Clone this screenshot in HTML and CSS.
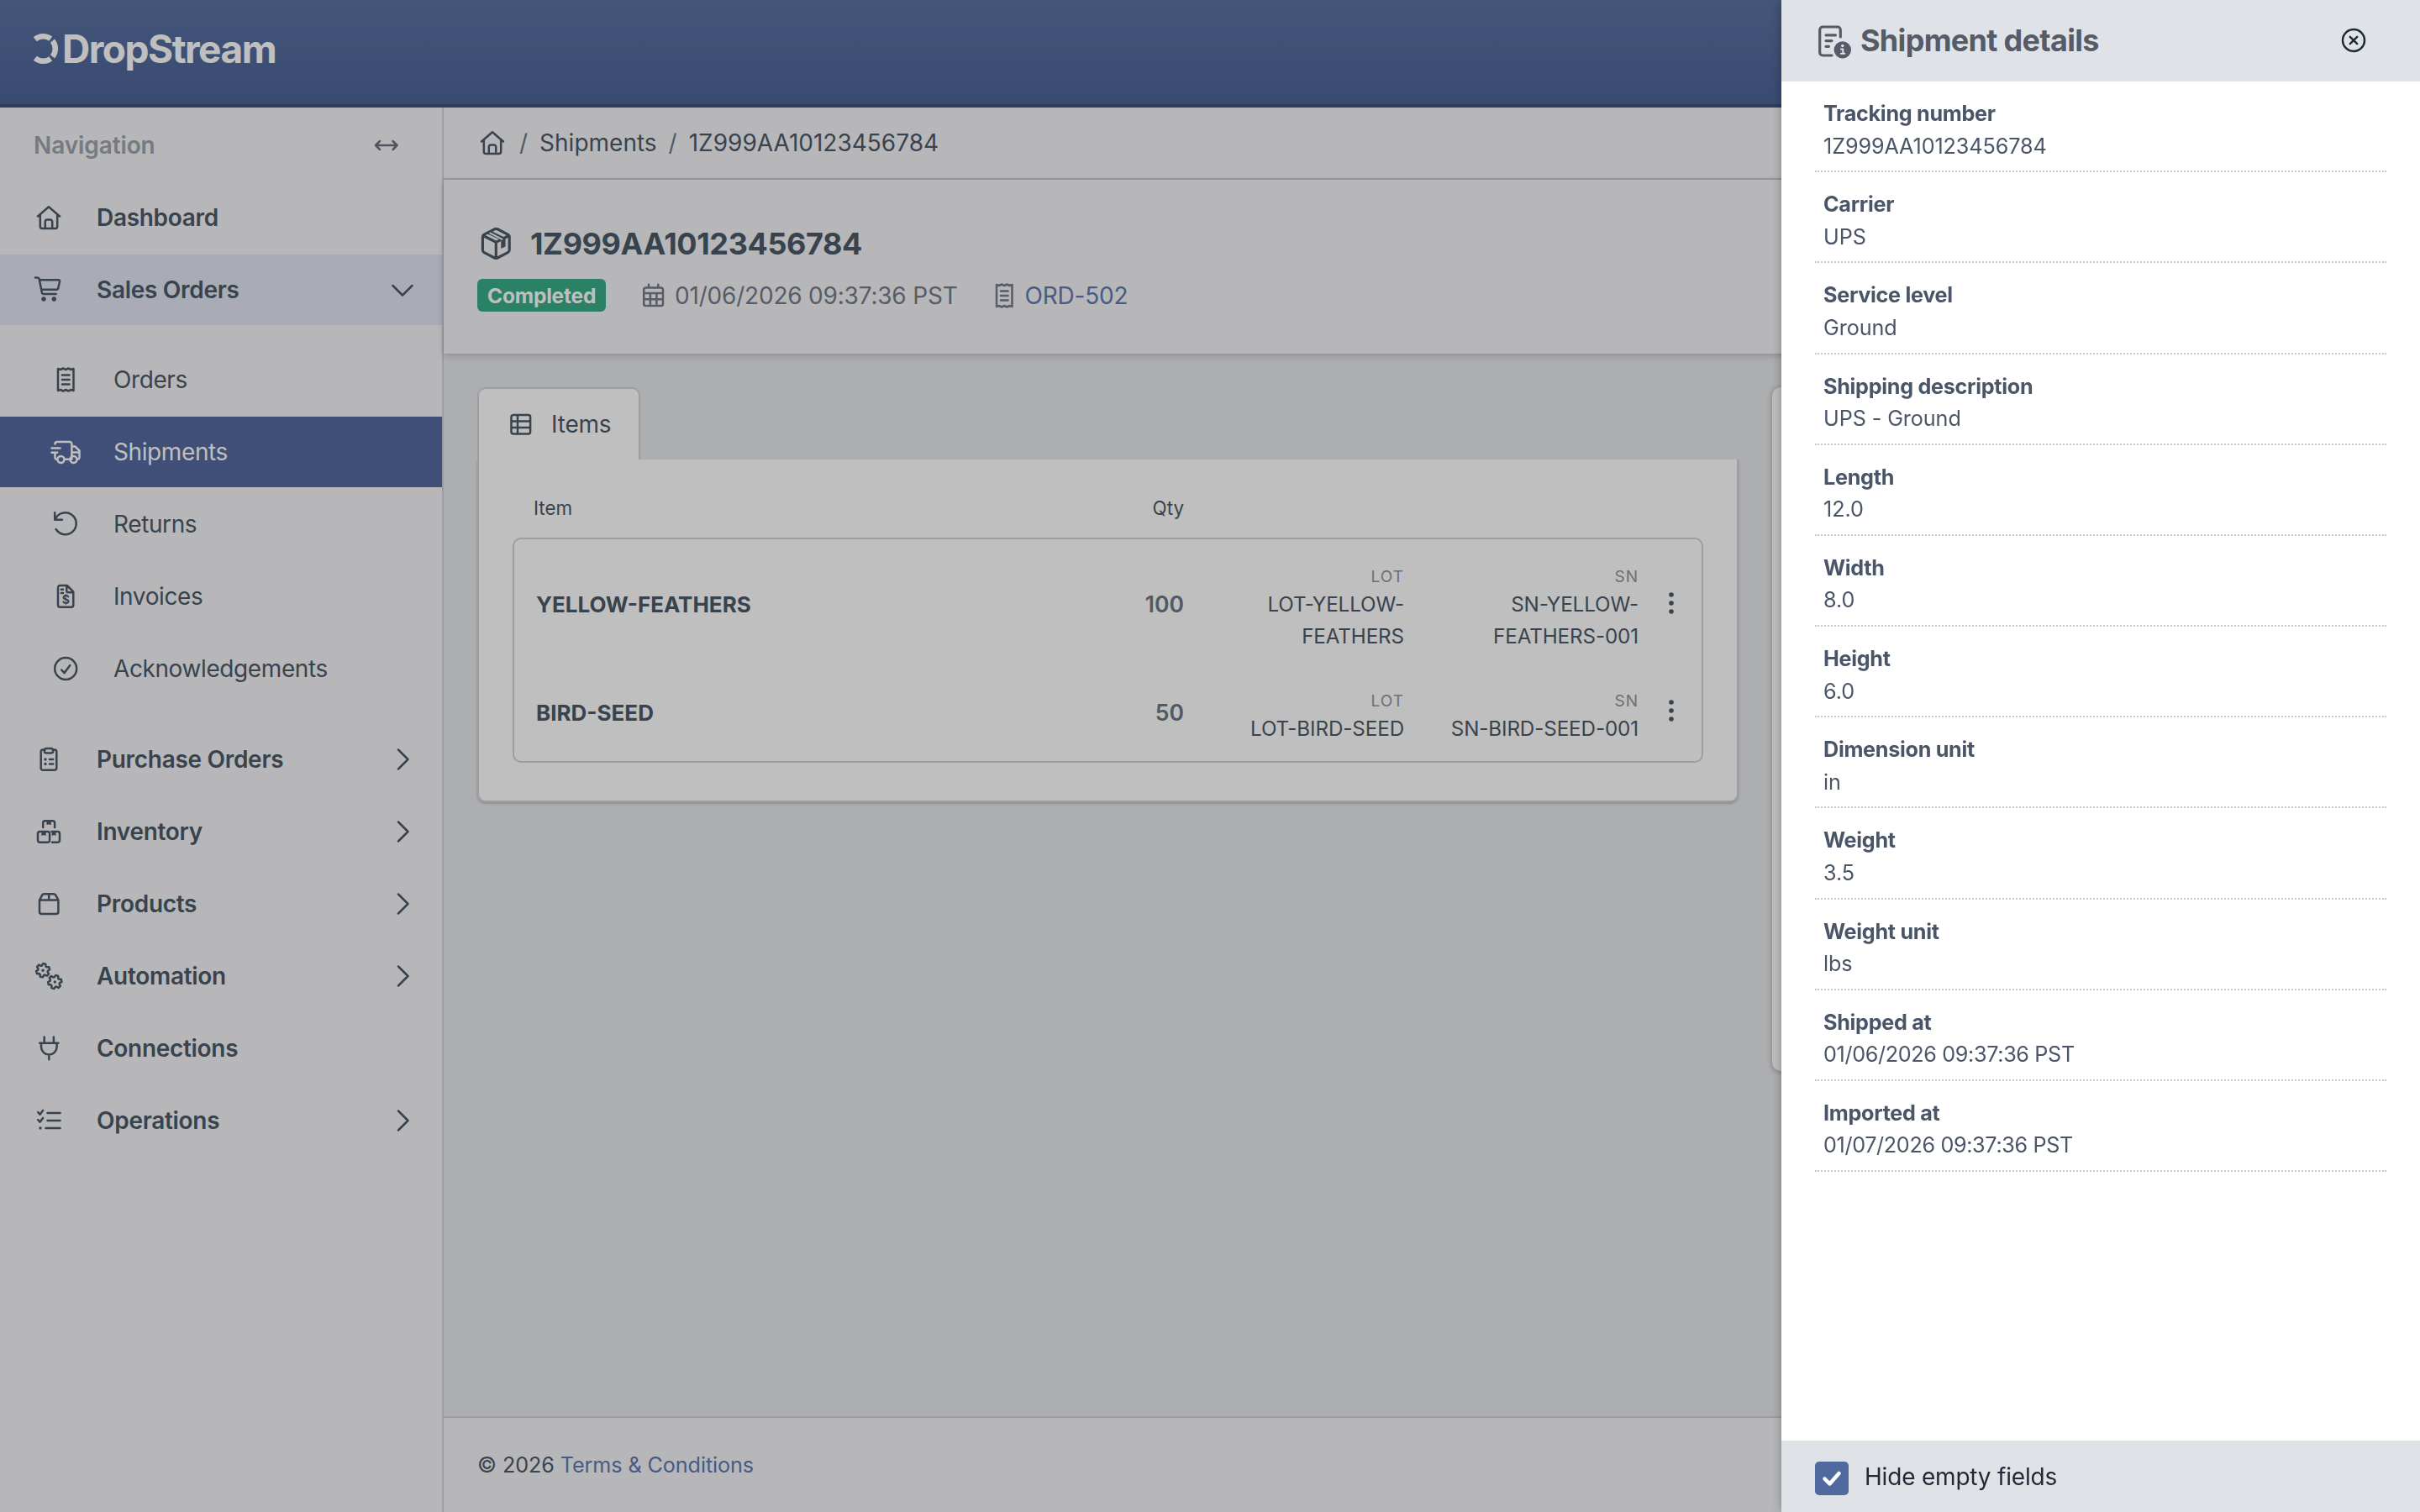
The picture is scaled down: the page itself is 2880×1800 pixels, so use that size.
FILE: index.html
```html
<!DOCTYPE html>
<html lang="en">
<head>
  <meta charset="utf-8">
  <title>DropStream - Shipment 1Z999AA10123456784</title>
  <link rel="stylesheet" href="styles.css">
</head>
<body>

  <!-- icons -->
  <svg class="sprite">
    <symbol id="home" viewBox="0 0 32 32">
      <path d="M3 14.5 16 3.2l13 11.3M5.800 12.500v14a2.500 2.500 0 0 0 2.500 2.500h15.400a2.500 2.500 0 0 0 2.500-2.500v-14M11.800 28.500v-7.500a2.500 2.500 0 0 1 2.500-2.500h3.400a2.500 2.500 0 0 1 2.500 2.500v7.500"/>
    </symbol>
    <symbol id="cart" viewBox="0 0 32 32">
      <path d="M0 1.500h2.600a2 2 0 0 1 2 1.600l3.200 16a2.300 2.300 0 0 0 2.300 1.900h14.500M5.200 4.200h22.600a1.300 1.300 0 0 1 1.300 1.600l-1.800 8.200a2.300 2.300 0 0 1-2.300 1.800H7.200"/>
      <circle class="fill" cx="10" cy="27" r="2.700"/><circle class="fill" cx="22.300" cy="27" r="2.700"/>
    </symbol>
    <symbol id="receipt" viewBox="0 0 32 32">
      <path d="M7 3.200V28.800M25.500 3.200V28.800M7 3l3 1 3.100-1.500 3.200 1.500 3.100-1.500 3.100 1.500 3-1M7 29l3-1 3.100 1.500 3.200-1.500 3.100 1.500 3.100-1.500 3 1M12 10.500h8.600M12 16h8.600M12 21.500h8.600"/>
    </symbol>
    <symbol id="truck" viewBox="0 0 32 32">
      <path d="M3.500 6.500c0-1.500 1-2.400 2.400-2.400H21a2.400 2.400 0 0 1 2.400 2.400v18.300M-.5 11.500H9.500M-.5 16.800H6.200M3.500 17v5.500a2.300 2.300 0 0 0 2.300 2.300M14.800 24.800h6.500M23.400 9.500h3.900l5.200 5v8a2.300 2.300 0 0 1-2.300 2.300M23.400 16.400h9"/>
      <circle cx="10.500" cy="25" r="4"/><circle cx="25.500" cy="25" r="4"/>
    </symbol>
    <symbol id="undo" viewBox="0 0 32 32">
      <path d="M3.200 2.300v8.500h8.700M3.600 10.600A13 13 0 1 1 4.600 22"/>
    </symbol>
    <symbol id="invoice" viewBox="0 0 32 32">
      <path d="M9.500 3h8.300l7.500 7.500v15.800a2.500 2.500 0 0 1-2.500 2.500H9.500a2.500 2.500 0 0 1-2.500-2.500V5.500A2.500 2.500 0 0 1 9.500 3zM17.300 3.500v5.700a2 2 0 0 0 2 2H25M10.800 7.800h2.200M10.800 12h2.200"/>
      <text class="glyph" x="16.200" y="25.300" text-anchor="middle">$</text>
    </symbol>
    <symbol id="check-circle" viewBox="0 0 32 32">
      <circle cx="16.200" cy="16" r="13"/><path d="M11.200 17.500l3.300 3.700 6.800-9.200"/>
    </symbol>
    <symbol id="clipboard" viewBox="0 0 32 32">
      <path d="M11.500 4.500H9a2.300 2.300 0 0 0-2.300 2.300v19.700A2.300 2.300 0 0 0 9 28.800h14a2.300 2.300 0 0 0 2.300-2.300V6.800A2.300 2.300 0 0 0 23 4.500h-2.500M13.500 3h5a2.800 2.800 0 0 1 0 5.600h-5a2.800 2.800 0 0 1 0-5.600zM17 16h4.200M17 21.500h4.200"/>
      <circle class="fill" cx="12" cy="16" r="1.700"/><circle class="fill" cx="12" cy="21.500" r="1.700"/>
    </symbol>
    <symbol id="boxes" viewBox="0 0 32 32">
      <path d="M9.200 11V5.500A2.300 2.300 0 0 1 11.500 3.200h9.300a2.300 2.300 0 0 1 2.300 2.300V11M5.300 16h9.500a2.300 2.300 0 0 1 2.300 2.300v8.200a2.300 2.300 0 0 1-2.300 2.300H5.300A2.300 2.300 0 0 1 3 26.500v-8.200A2.300 2.300 0 0 1 5.300 16zM19.500 16h7.200a2.300 2.300 0 0 1 2.300 2.300v8.200a2.300 2.300 0 0 1-2.300 2.300H20"/>
      <path class="fill" d="M13.500 4h5.300v4.200l-2.600-1-2.700 1zM7.400 16.500h5.300v4.400l-2.600-1-2.700 1zM19.800 16.500h4.700v4.400l-2.300-1-2.400 1z"/>
    </symbol>
    <symbol id="box" viewBox="0 0 32 32">
      <path d="M5 11.500 8 5.800a3 3 0 0 1 2.600-1.500h11.200a3 3 0 0 1 2.600 1.500l3 5.700v14a2.500 2.500 0 0 1-2.500 2.500H7.500A2.500 2.500 0 0 1 5 25.500zM5 11.500h22.400M16.200 4.300v7.200"/>
    </symbol>
    <symbol id="gears" viewBox="0 0 32 32">
      <path transform="translate(9.100 9.200) rotate(12)" d="M-2.300-5.400-1.600-8h3.200l.7 2.600 1.230.71 2.600-.7 1.600 2.780-1.900 1.900v1.420l1.900 1.900-1.600 2.780-2.600-.7-1.230.71-.7 2.600h-3.200l-.7-2.600-1.230-.71-2.600.7-1.600-2.780 1.900-1.900V-.71l-1.900-1.900 1.600-2.780 2.600.7z"/>
      <path transform="translate(23.300 23) rotate(18)" d="M-2.300-5.400-1.600-8h3.200l.7 2.600 1.230.71 2.600-.7 1.600 2.780-1.900 1.900v1.420l1.900 1.900-1.600 2.780-2.600-.7-1.230.71-.7 2.600h-3.200l-.7-2.600-1.230-.71-2.600.7-1.600-2.780 1.900-1.900V-.71l-1.900-1.900 1.600-2.780 2.600.7z"/>
      <circle class="fill" cx="9.100" cy="9.200" r="1.700"/><circle class="fill" cx="23.300" cy="23" r="1.700"/>
    </symbol>
    <symbol id="plug" viewBox="0 0 32 32">
      <path d="M10.700 2.500v7M21.900 2.500v7M5.200 9.700h22.200M7 9.700v4.600a9.300 9.300 0 0 0 18.600 0V9.700M16.300 23.700v5.600"/>
    </symbol>
    <symbol id="tasks" viewBox="0 0 32 32">
      <path d="M3.200 6l2.300 2.700 3.600-4.800M3.200 15l2.300 2.700 3.600-4.800M14.500 7h15M14.500 16h15M12.500 25h17"/>
      <circle class="fill" cx="6" cy="25" r="1.700"/>
    </symbol>
    <symbol id="chevron" viewBox="0 0 32 32"><path d="M11 4.500 22.500 16 11 27.500"/></symbol>
    <symbol id="arrows" viewBox="0 0 32 32"><path d="M3 16h25.600M8 11l-5 5 5 5M23.600 11l5 5-5 5"/></symbol>
    <symbol id="package" viewBox="0 0 40 40">
      <path d="M18.500 2.800a4 4 0 0 1 3.600 0l12.200 6.300a3.300 3.300 0 0 1 1.900 3v15.500a3.300 3.300 0 0 1-1.900 3L22.100 37a4 4 0 0 1-3.600 0L6.200 30.600a3.300 3.300 0 0 1-1.800-3V12.100a3.300 3.300 0 0 1 1.800-3zM5 10.500l15.300 7.800L35.500 10.500M20.300 18.500v18"/>
      <path class="fill" d="M9 8l5.500-3L31.500 13v10.500l-5.200 2.500V16z"/>
      <path class="cut" d="M13.500 7.600 27.500 14.800"/>
    </symbol>
    <symbol id="calendar" viewBox="0 0 32 32">
      <path d="M6.500 6.500h18.200a2.300 2.300 0 0 1 2.300 2.300v17a2.300 2.300 0 0 1-2.300 2.300H6.500a2.300 2.300 0 0 1-2.300-2.300v-17a2.300 2.300 0 0 1 2.300-2.300zM10 2.800v3.500M21.300 2.800v3.500M4.500 13h22.300M4.500 20.300h22.300M11.900 13v15M19.400 13v15"/>
    </symbol>
    <symbol id="table" viewBox="0 0 32 32">
      <path d="M7 5h17.600a2.500 2.500 0 0 1 2.500 2.500v17.600a2.500 2.500 0 0 1-2.500 2.500H7a2.500 2.500 0 0 1-2.500-2.500V7.500A2.500 2.500 0 0 1 7 5zM4.500 12.500h22.600M4.500 20h22.600M12 5v22.600"/>
    </symbol>
    <symbol id="details" viewBox="0 0 40 40">
      <path d="M30.300 16V7.500a3.500 3.500 0 0 0-3.500-3.500H9.200a3.500 3.500 0 0 0-3.500 3.500v27a3.500 3.500 0 0 0 3.500 3.500H20M13 13.800h11.500M13 20.600h7M13 27.300h3.500"/>
      <circle class="fill" cx="32.800" cy="31.400" r="10.200"/>
      <circle class="hole" cx="32.800" cy="26.500" r="1.700"/>
      <path class="mark" d="M31 30.500h2.300v5M30.800 35.700h4.600"/>
    </symbol>
    <symbol id="close" viewBox="0 0 32 32"><circle cx="16" cy="16" r="13"/><path d="M11.800 11.800l8.400 8.400M20.200 11.800l-8.400 8.400"/></symbol>
    <symbol id="dots" viewBox="0 0 8 32">
      <circle class="fill" cx="4" cy="6" r="2.800"/><circle class="fill" cx="4" cy="16" r="2.800"/><circle class="fill" cx="4" cy="26" r="2.800"/>
    </symbol>
  </svg>

  <header class="topbar">
    <svg class="logo-mark" viewBox="0 0 32 36"><path d="M1.800 6.800A15 15 0 0 1 20.300 6.200M22.500 8.600A15 15 0 0 1 22.500 27.400M20.300 29.800A15 15 0 0 1 1.800 29.200"/></svg>
    <span class="logo-text">DropStream</span>
  </header>

  <div class="layout">
    <nav class="sidebar">
      <div class="nav-title">Navigation <svg class="icon"><use href="#arrows"/></svg></div>
      <a class="nav-item"><svg class="icon"><use href="#home"/></svg><span>Dashboard</span></a>
      <a class="nav-item open"><svg class="icon"><use href="#cart"/></svg><span>Sales Orders</span><svg class="icon chevron down"><use href="#chevron"/></svg></a>
      <div class="sub-nav">
        <a class="nav-item"><svg class="icon"><use href="#receipt"/></svg><span>Orders</span></a>
        <a class="nav-item active"><svg class="icon"><use href="#truck"/></svg><span>Shipments</span></a>
        <a class="nav-item"><svg class="icon"><use href="#undo"/></svg><span>Returns</span></a>
        <a class="nav-item"><svg class="icon"><use href="#invoice"/></svg><span>Invoices</span></a>
        <a class="nav-item"><svg class="icon"><use href="#check-circle"/></svg><span>Acknowledgements</span></a>
      </div>
      <a class="nav-item"><svg class="icon"><use href="#clipboard"/></svg><span>Purchase Orders</span><svg class="icon chevron"><use href="#chevron"/></svg></a>
      <a class="nav-item"><svg class="icon"><use href="#boxes"/></svg><span>Inventory</span><svg class="icon chevron"><use href="#chevron"/></svg></a>
      <a class="nav-item"><svg class="icon"><use href="#box"/></svg><span>Products</span><svg class="icon chevron"><use href="#chevron"/></svg></a>
      <a class="nav-item"><svg class="icon"><use href="#gears"/></svg><span>Automation</span><svg class="icon chevron"><use href="#chevron"/></svg></a>
      <a class="nav-item"><svg class="icon"><use href="#plug"/></svg><span>Connections</span></a>
      <a class="nav-item"><svg class="icon"><use href="#tasks"/></svg><span>Operations</span><svg class="icon chevron"><use href="#chevron"/></svg></a>
    </nav>

    <main class="main">
      <div class="breadcrumb">
        <svg class="icon"><use href="#home"/></svg>
        <span class="slash">/</span>
        <span>Shipments</span>
        <span class="slash">/</span>
        <span>1Z999AA10123456784</span>
      </div>

      <div class="page-header">
        <h1><svg class="icon-lg"><use href="#package"/></svg>1Z999AA10123456784</h1>
        <div class="meta">
          <span class="badge">Completed</span>
          <span class="meta-item"><svg class="icon"><use href="#calendar"/></svg>01/06/2026 09:37:36 PST</span>
          <span class="meta-item"><svg class="icon"><use href="#receipt"/></svg><a>ORD-502</a></span>
        </div>
      </div>

      <div class="content">
        <section class="items">
          <div class="tab"><svg class="icon"><use href="#table"/></svg>Items</div>
          <div class="panel">
            <div class="items-head"><span>Item</span><span>Qty</span></div>
            <div class="items-box">
              <div class="item-row">
                <b class="sku">YELLOW-FEATHERS</b>
                <span class="qty">100</span>
                <div class="attr"><small>LOT</small>LOT-YELLOW-<br>FEATHERS</div>
                <div class="attr"><small>SN</small>SN-YELLOW-<br>FEATHERS-001</div>
                <svg class="dots"><use href="#dots"/></svg>
              </div>
              <div class="item-row short">
                <b class="sku">BIRD-SEED</b>
                <span class="qty">50</span>
                <div class="attr"><small>LOT</small>LOT-BIRD-SEED</div>
                <div class="attr"><small>SN</small>SN-BIRD-SEED-001</div>
                <svg class="dots"><use href="#dots"/></svg>
              </div>
            </div>
          </div>
        </section>
        <aside class="side-card"></aside>
      </div>

      <footer class="footer">© 2026 <a>Terms &amp; Conditions</a></footer>
    </main>
  </div>

  <div class="backdrop"></div>

  <div class="drawer">
    <div class="drawer-head">
      <h2><svg class="icon-lg"><use href="#details"/></svg>Shipment details</h2>
      <svg class="icon"><use href="#close"/></svg>
    </div>
    <dl class="fields">
      <div><dt>Tracking number</dt><dd>1Z999AA10123456784</dd></div>
      <div><dt>Carrier</dt><dd>UPS</dd></div>
      <div><dt>Service level</dt><dd>Ground</dd></div>
      <div><dt>Shipping description</dt><dd>UPS - Ground</dd></div>
      <div><dt>Length</dt><dd>12.0</dd></div>
      <div><dt>Width</dt><dd>8.0</dd></div>
      <div><dt>Height</dt><dd>6.0</dd></div>
      <div><dt>Dimension unit</dt><dd>in</dd></div>
      <div><dt>Weight</dt><dd>3.5</dd></div>
      <div><dt>Weight unit</dt><dd>lbs</dd></div>
      <div><dt>Shipped at</dt><dd class="time">01/06/2026 09:37:36 PST</dd></div>
      <div><dt>Imported at</dt><dd class="time">01/07/2026 09:37:36 PST</dd></div>
    </dl>
    <label class="drawer-foot">
      <span class="checkbox"><svg viewBox="0 0 40 40"><path d="M11.500 20.500l6 6L28.500 14"/></svg></span>
      Hide empty fields
    </label>
  </div>

</body>
</html>
```
FILE: styles.css
```css
* {
  box-sizing: border-box;
}
body {
  margin: 0;
  height: 1800px;
  overflow: hidden;
  display: flex;
  flex-direction: column;
  font-family: Inter, "Liberation Sans", sans-serif;
  font-size: 28px;
  color: #4d5a68;
  background: #e7e8ea;
}
h1, h2, dl, dd {
  margin: 0;
}

/* icons */
.sprite {
  position: absolute;
  width: 0;
  height: 0;
}
svg {
  flex: none;
  overflow: visible;
  fill: none;
  stroke: currentColor;
  stroke-width: 2.5;
  stroke-linecap: round;
  stroke-linejoin: round;
}
symbol {
  overflow: visible;
}
.icon {
  width: 32px;
  height: 32px;
}
.icon-lg {
  width: 40px;
  height: 40px;
  stroke-width: 3.2;
}
.fill {
  fill: currentColor;
  stroke: none;
}
.cut {
  stroke: #f4f5f8;
  stroke-width: 2;
}
.hole {
  fill: #dfe3e8;
  stroke: none;
}
.mark {
  stroke: #dfe3e8;
  stroke-width: 2;
}
.glyph {
  fill: currentColor;
  stroke: none;
  font-size: 14px;
  font-weight: 700;
}

/* top bar */
.topbar {
  height: 128px;
  flex: none;
  display: flex;
  align-items: center;
  padding: 0 40px 8px;
  border-bottom: 4px solid #3f517b;
  background: linear-gradient(#5a72a2, #4d6497);
  color: #fff;
}
.logo-mark {
  width: 32px;
  height: 36px;
  stroke-width: 6.5;
  stroke-linecap: butt;
}
.logo-text {
  font-size: 46px;
  font-weight: 700;
  letter-spacing: -1.5px;
  margin-left: 2px;
}

.layout {
  flex: 1;
  display: flex;
  min-height: 0;
}

/* sidebar */
.sidebar {
  width: 528px;
  flex: none;
  background: #f4f5f8;
  border-right: 2px solid #cfd2da;
}
.nav-title {
  height: 89px;
  display: flex;
  align-items: center;
  justify-content: space-between;
  padding: 0 50px 0 40px;
  font-weight: 600;
  letter-spacing: -0.1px;
  color: #9ca4ab;
}
.nav-title .icon {
  color: #6d717c;
}
.nav-item {
  height: 84px;
  margin-bottom: 2px;
  display: flex;
  align-items: center;
  padding: 0 31px 0 42px;
  font-weight: 600;
  letter-spacing: -0.3px;
}
.nav-item span {
  margin-left: 41px;
  flex: 1;
}
.chevron.down {
  transform: rotate(90deg);
}
.sub-nav {
  padding: 21px 0 22px;
}
.sub-nav .nav-item {
  padding-left: 62px;
  font-weight: 400;
  letter-spacing: -0.4px;
}
.nav-item.open {
  background: #e2e6f1;
}
.nav-item.active {
  background: #546a9f;
  color: #fff;
}

/* main column */
.main {
  flex: 1;
  min-width: 0;
  display: flex;
  flex-direction: column;
}
.breadcrumb {
  height: 86px;
  display: flex;
  align-items: center;
  gap: 14px;
  padding: 0 42px;
  background: #f4f5f8;
  border-bottom: 2px solid #cfd2da;
}
.slash {
  color: #6d7886;
}
.breadcrumb .slash:nth-child(2) {
  margin-left: 2px;
}
.page-header {
  height: 207px;
  padding: 44px 40px 0;
  background: #f4f5f8;
  box-shadow: 0 2px 8px rgba(0, 0, 0, 0.2);
}
.page-header h1 {
  display: flex;
  align-items: center;
  gap: 21px;
  height: 64px;
  padding-left: 2px;
  font-size: 36px;
  font-weight: 700;
  letter-spacing: -0.4px;
}
.meta {
  display: flex;
  align-items: center;
  margin-top: 10px;
  color: #737c88;
}
.badge {
  height: 39px;
  line-height: 40px;
  padding: 0 12px;
  width: 153px;
  border-radius: 6px;
  background: #38ad87;
  color: #fff;
  font-size: 24.5px;
  font-weight: 700;
  letter-spacing: -0.2px;
}
.meta-item {
  display: flex;
  align-items: center;
  gap: 9px;
  margin-left: 41px;
  letter-spacing: -0.2px;
}
.meta-item + .meta-item {
  margin-left: 39px;
}
.meta a, .footer a {
  color: #6079b2;
}

.content {
  flex: 1;
  display: flex;
  align-items: flex-start;
  gap: 40px;
  padding: 40px;
}
.items {
  width: 1501px;
  flex: none;
}
.tab {
  width: 194px;
  height: 86px;
  display: flex;
  align-items: center;
  gap: 20px;
  padding: 0 0 0 34px;
  background: #fff;
  border: 2px solid #cfd4db;
  border-bottom: none;
  border-radius: 10px 10px 0 0;
  letter-spacing: -0.2px;
}
.panel {
  height: 408px;
  padding: 36px 40px 0;
  background: #fff;
  border: 2px solid #cfd4db;
  border-top: none;
  border-radius: 0 0 10px 10px;
  box-shadow: 0 2px 3px rgba(0, 0, 0, 0.18);
}
.items-head {
  display: flex;
  justify-content: space-between;
  width: 799px;
  height: 57px;
  padding-left: 25px;
  font-size: 22.400px;
  line-height: 44px;
}
.items-box {
  height: 268px;
  padding-top: 28px;
  border: 2px solid #cfd4db;
  border-radius: 10px;
}
.item-row {
  display: grid;
  grid-template-columns: 556px 241px 262px 279px 80px;
  height: 148px;
}
.sku {
  padding-left: 26px;
  font-size: 26px;
  font-weight: 700;
  line-height: 99px;
}
.qty {
  font-size: 26.500px;
  font-weight: 600;
  line-height: 99px;
  text-align: right;
  color: #6c7885;
}
.short .sku, .short .qty {
  line-height: 61px;
}
.attr {
  font-size: 24.200px;
  letter-spacing: -0.1px;
  line-height: 38px;
  text-align: right;
}
.attr small {
  display: block;
  height: 31px;
  line-height: 33px;
  font-size: 19px;
  letter-spacing: 1px;
  color: #8f969f;
}
.dots {
  width: 8px;
  height: 32px;
  margin: 32px 0 0 35px;
}
.short .dots {
  margin-top: 12px;
}
.side-card {
  width: 731px;
  height: 814px;
  flex: none;
  background: #fff;
  border-radius: 10px;
  box-shadow: 0 1px 6px rgba(0, 0, 0, 0.3);
}
.footer {
  height: 114px;
  flex: none;
  padding: 0 40px;
  line-height: 113px;
  background: #f4f5f8;
  border-top: 2px solid #cfd2da;
  font-size: 25.200px;
  letter-spacing: -0.1px;
}

/* drawer */
.backdrop {
  position: fixed;
  inset: 0;
  background: rgba(0, 0, 0, 0.25);
}
.drawer {
  position: fixed;
  top: 0;
  right: 0;
  bottom: 0;
  width: 760px;
  display: flex;
  flex-direction: column;
  background: #fff;
  box-shadow: 0 0 12px rgba(0, 0, 0, 0.3);
}
.drawer-head {
  height: 97px;
  flex: none;
  display: flex;
  align-items: center;
  justify-content: space-between;
  padding: 0 63px 2px 40px;
  background: #dfe3e8;
  color: #222936;
}
.drawer-head h2 {
  display: flex;
  align-items: center;
  gap: 14px;
  font-size: 36px;
  font-weight: 700;
  letter-spacing: -0.7px;
  color: #565b67;
}
.fields {
  flex: 1;
  padding: 0 40px;
  font-size: 25.200px;
  letter-spacing: -0.1px;
  color: #4a5568;
}
.fields div {
  height: 108.180px;
  padding: 19px 10px 0;
  line-height: 38.500px;
  border-bottom: 2px dotted #c8c8c8;
}
.fields dt {
  font-weight: 700;
  letter-spacing: -0.3px;
}
.fields .time {
  letter-spacing: -0.35px;
}
.drawer-foot {
  height: 85px;
  display: flex;
  align-items: center;
  gap: 19px;
  padding: 0 40px;
  background: #dfe3e8;
  color: #222936;
  letter-spacing: -0.2px;
}
.checkbox {
  width: 40px;
  height: 40px;
  margin-top: 4px;
  border-radius: 5px;
  background: #506a9f;
  color: #fff;
}
.checkbox svg {
  width: 40px;
  height: 40px;
  stroke-width: 4.500;
}
```
